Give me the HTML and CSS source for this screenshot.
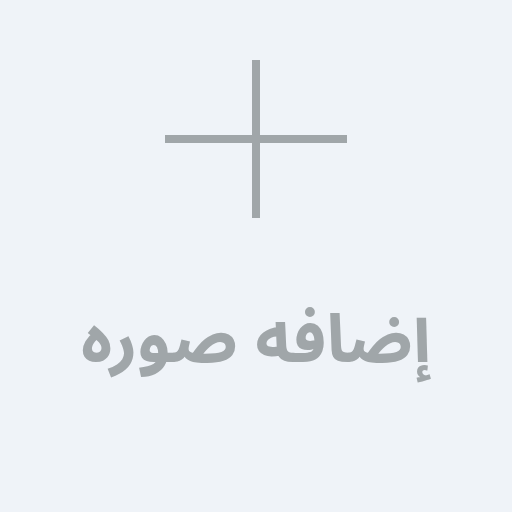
FILE: index.html
```html
<!DOCTYPE html>
<html lang="ar" dir="rtl">
<head>
<meta charset="utf-8">
<link rel="stylesheet" href="styles.css">
</head>
<body>
<div class="card">
  <div class="plus">
    <span class="bar h"></span>
    <span class="bar v"></span>
  </div>
  <div class="label">إضافه صوره</div>
</div>
</body>
</html>
```
FILE: styles.css
```css
html, body {
  margin: 0;
  padding: 0;
  width: 512px;
  height: 512px;
  background: #eff3f8;
}
.card {
  display: flex;
  flex-direction: column;
  align-items: center;
  padding-top: 60px;
}
.plus {
  position: relative;
  width: 182px;
  height: 158px;
}
.bar {
  position: absolute;
  background: #a0a6a9;
}
.bar.h {
  left: 0;
  right: 0;
  top: 75px;
  height: 8px;
}
.bar.v {
  top: 0;
  bottom: 0;
  left: 87px;
  width: 8px;
}
.label {
  margin-top: 76px;
  font-family: "Noto Sans Arabic", "DejaVu Sans", sans-serif;
  font-weight: bold;
  font-size: 67px;
  color: #a0a6a9;
  line-height: 1.4;
}
```
